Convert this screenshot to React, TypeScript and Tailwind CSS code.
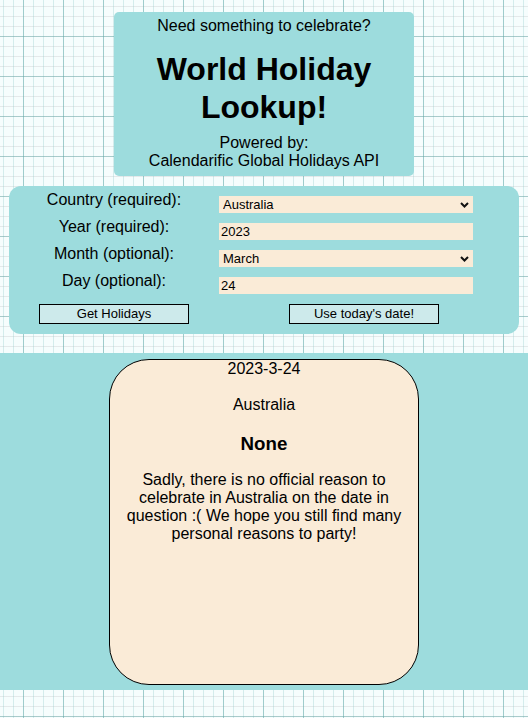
import React from "react";

function Chevron() {
  return (
    <svg
      className="pointer-events-none absolute right-[4px] top-[6px]"
      width="9"
      height="6"
      viewBox="0 0 9 6"
      fill="none"
    >
      <polyline points="1,1 4.5,4.5 8,1" stroke="#111" strokeWidth="2" />
    </svg>
  );
}

export default function App() {
  const labelCls = "h-[27px] text-center text-[16px] leading-[18px] text-black";
  const fieldCls =
    "block w-[254px] h-[17px] bg-[#faebd7] text-[13px] leading-[17px] text-black outline-none border-0";
  return (
    <div
      className="min-h-screen w-full bg-[#f6fdfd] [background-image:linear-gradient(to_right,rgba(95,165,165,0.45)_1px,transparent_1px),linear-gradient(to_bottom,rgba(95,165,165,0.45)_1px,transparent_1px),linear-gradient(to_right,rgba(140,200,200,0.32)_1px,transparent_1px),linear-gradient(to_bottom,rgba(190,190,195,0.32)_1px,transparent_1px)] [background-size:40px_40px,40px_40px,10px_10px,10px_10px] [background-position:23px_0,0_36px,3px_0,0_6px] pt-[12px] pb-[1px] font-['Liberation_Sans',Arial,sans-serif] text-black"
    >
      {/* Header */}
      <div className="mx-auto w-[300px] rounded-[5px] bg-[#9ddcdd] pt-[5px] pb-[6px] text-center">
        <p className="text-[16px] leading-[18px]">Need something to celebrate?</p>
        <h1 className="mt-[15px] text-[32px] font-bold leading-[38px]">
          World Holiday
          <br />
          Lookup!
        </h1>
        <p className="mt-[8px] text-[16px] leading-[18px]">
          Powered by:
          <br />
          Calendarific Global Holidays API
        </p>
      </div>

      {/* Form */}
      <div className="mx-[9px] mt-[10px] rounded-[12px] bg-[#9ddcdd] pt-[5px] pb-[10px]">
        <div className="grid grid-cols-[210px_290px]">
          <div className={labelCls}>Country (required):</div>
          <div className="h-[27px] pt-[5px]">
            <div className="relative w-[254px]">
              <select className={fieldCls + " appearance-none pl-[4px]"} defaultValue="Australia">
                <option>Australia</option>
              </select>
              <Chevron />
            </div>
          </div>

          <div className={labelCls}>Year (required):</div>
          <div className="h-[27px] pt-[5px]">
            <input className={fieldCls + " pl-[2px]"} defaultValue="2023" />
          </div>

          <div className={labelCls}>Month (optional):</div>
          <div className="h-[27px] pt-[5px]">
            <div className="relative w-[254px]">
              <select className={fieldCls + " appearance-none pl-[4px]"} defaultValue="March">
                <option>March</option>
              </select>
              <Chevron />
            </div>
          </div>

          <div className={labelCls}>Day (optional):</div>
          <div className="h-[27px] pt-[5px]">
            <input className={fieldCls + " pl-[2px]"} defaultValue="24" />
          </div>

          <div className="mt-[5px] flex justify-center">
            <button className="h-[20px] w-[150px] border border-black bg-[#cdeaeb] text-[13px] leading-[18px]">
              Get Holidays
            </button>
          </div>
          <div className="mt-[5px] flex justify-center">
            <button className="h-[20px] w-[150px] border border-black bg-[#cdeaeb] text-[13px] leading-[18px]">
              Use today's date!
            </button>
          </div>
        </div>
      </div>

      {/* Results */}
      <div className="mt-[19px] bg-[#9ddcdd] pt-[6px] pb-[5px]">
        <div className="mx-auto h-[326px] w-[310px] rounded-[40px] border border-black bg-[#faebd7] px-[5px] text-center">
          <p className="text-[16px] leading-[18px]">2023-3-24</p>
          <p className="mt-[18px] text-[16px] leading-[18px]">Australia</p>
          <h3 className="mt-[19px] text-[18.72px] font-bold leading-[21px]">None</h3>
          <p className="mt-[17px] text-[16px] leading-[18px]">
            Sadly, there is no official reason to celebrate in Australia on the date in question :( We
            hope you still find many personal reasons to party!
          </p>
        </div>
      </div>
    </div>
  );
}
